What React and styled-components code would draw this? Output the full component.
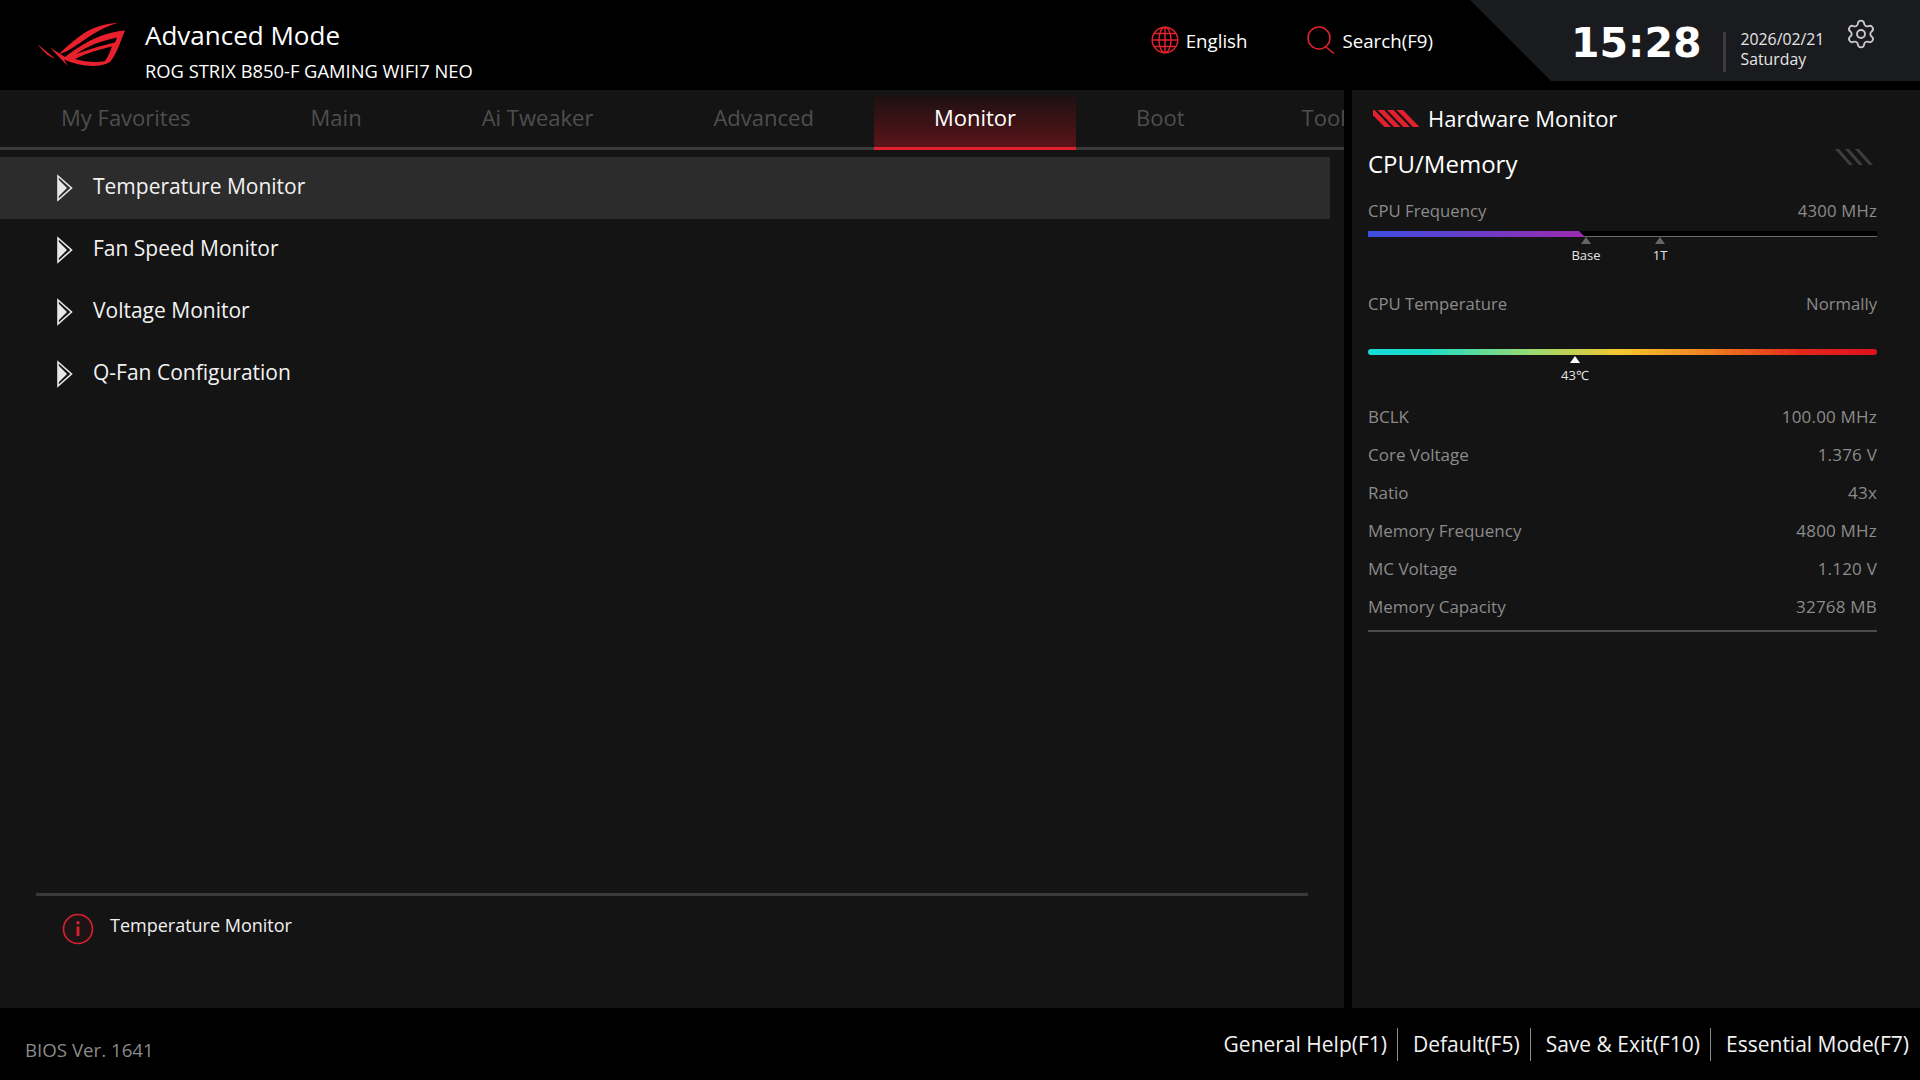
import React from 'react';
import styled, { createGlobalStyle } from 'styled-components';
import { Settings } from 'lucide-react';

const GlobalStyle = createGlobalStyle`
  html, body {
    margin: 0;
    padding: 0;
    width: 1920px;
    height: 1080px;
    overflow: hidden;
    background: #000;
    font-family: "Open Sans", "Noto Sans", sans-serif;
  }
  * { box-sizing: border-box; }
`;

const Page = styled.div`
  width: 1920px;
  height: 1080px;
  display: flex;
  flex-direction: column;
  background: #000;
`;

const Header = styled.header`
  height: 90px;
  display: flex;
  align-items: flex-start;
`;

const Brand = styled.div`
  display: flex;
  align-items: flex-start;
  padding-left: 37px;
  svg { margin-top: 22px; }
`;

const BrandText = styled.div`
  margin-left: 20px;
  color: #fff;
`;

const ModeTitle = styled.div`
  font-size: 26px;
  line-height: 36px;
  margin-top: 17px;
`;

const BoardName = styled.div`
  font-size: 18.35px;
  line-height: 26px;
  margin-top: 5px;
`;

const Tools = styled.div`
  margin-left: auto;
  margin-right: 37px;
  height: 81px;
  display: flex;
  align-items: center;
  gap: 60px;
`;

const Tool = styled.div`
  display: flex;
  align-items: center;
  gap: 7px;
  margin-top: -1px;
  color: #fff;
  font-size: 18.7px;
`;

const TimeBox = styled.div`
  width: 450px;
  height: 81px;
  padding-left: 101px;
  display: flex;
  align-items: flex-start;
  background: #1a1b1f;
  clip-path: polygon(0 0, 100% 0, 100% 100%, 81px 100%);
`;

const Clock = styled.div`
  font-family: "DejaVu Sans", sans-serif;
  font-weight: 700;
  font-size: 41px;
  line-height: 48px;
  margin-top: 19px;
  color: #fff;
`;

const TimeRule = styled.div`
  width: 3px;
  height: 40px;
  margin: 32px 15px 0 21px;
  background: #3c3c3e;
`;

const DateText = styled.div`
  margin-top: 30px;
  color: #e6e6e6;
  font-size: 15.8px;
  line-height: 19.5px;
`;

const GearSlot = styled.div`
  margin: 18px 0 0 21px;
  color: #c8c8c8;
  line-height: 0;
`;

const Body = styled.main`
  flex: 1;
  display: flex;
  gap: 8px;
`;

const LeftPanel = styled.section`
  width: 1344px;
  display: flex;
  flex-direction: column;
  background: #141414;
`;

const Tabs = styled.nav`
  height: 60px;
  padding-left: 1px;
  display: flex;
  overflow: hidden;
  box-shadow: inset 0 -3px 0 #3a3a3a;
`;

const Tab = styled.div`
  flex: none;
  height: ${(p) => (p.$active ? '55px' : '60px')};
  margin-top: ${(p) => (p.$active ? '5px' : '0')};
  margin-left: ${(p) => (p.$tail ? '-3px' : '0')};
  padding: ${(p) => (p.$active ? '0 60px 9px' : '0 60px 4px')};
  display: flex;
  align-items: center;
  font-size: 22px;
  color: ${(p) => (p.$active ? '#fff' : '#4e4e4e')};
  background: ${(p) => (p.$active ? 'linear-gradient(180deg, #1c1011 0%, #5a1519 100%)' : 'none')};
  border-bottom: 3px solid ${(p) => (p.$active ? '#e0202f' : '#3a3a3a')};
`;

const MenuList = styled.ul`
  flex: 1;
  list-style: none;
  margin: 7px 0 0;
  padding: 0;
`;

const MenuRow = styled.li`
  width: 1330px;
  height: 62px;
  padding-left: 57px;
  display: flex;
  align-items: center;
  gap: 20px;
  font-size: 21px;
  color: #f2f2f2;
  background: ${(p) => (p.$active ? '#2c2c2c' : 'transparent')};
`;

const MenuLabel = styled.span`
  margin-bottom: 4px;
`;

const HelpBox = styled.div`
  width: 1272px;
  height: 115px;
  margin-left: 36px;
  padding: 17px 0 0 26px;
  display: flex;
  align-items: flex-start;
  gap: 16px;
  border-top: 3px solid #3a3a3a;
  color: #f0f0f0;
  font-size: 18px;
  line-height: 24px;
`;

const RightPanel = styled.aside`
  flex: 1;
  padding: 0 43px 0 16px;
  background: #141414;
`;

const HwTitle = styled.div`
  height: 56px;
  padding-left: 5px;
  display: flex;
  align-items: center;
  gap: 7px;
  color: #fff;
  font-size: 22px;
`;

const SectionRow = styled.div`
  height: 34px;
  display: flex;
  align-items: center;
  justify-content: space-between;
  padding-right: 2px;
  color: #fff;
  font-size: 24px;
  svg { margin-top: -12px; }
`;

const StatHead = styled.div`
  height: 30px;
  margin-top: ${(p) => p.$top}px;
  display: flex;
  align-items: center;
  justify-content: space-between;
  color: #8b8b8b;
  font-size: 16.7px;
`;

const StatValue = styled.span`
  letter-spacing: 0.2px;
`;

const FreqGauge = styled.div`
  position: relative;
  height: 6px;
  margin-top: 6px;
  background: #000;
  border-bottom: 1px solid #6a6a6a;
`;

const FreqFill = styled.div`
  height: 6px;
  background: linear-gradient(90deg, #3c4de2 0%, #9c2bae 100%);
  clip-path: polygon(0 0, 211px 0, 100% 100%, 0 100%);
`;

const TempGauge = styled.div`
  position: relative;
  height: 6px;
  margin-top: 31px;
  border-radius: 3px;
  background: linear-gradient(90deg, #17dcdc 0%, #1fdcc4 12%, #8edb7a 30%, #f6c62e 50%, #ef7b1f 68%, #e3281a 85%, #e0101e 100%);
`;

const Marker = styled.div`
  position: absolute;
  top: ${(p) => p.$top}px;
  left: ${(p) => p.$left}px;
  display: flex;
  flex-direction: column;
  align-items: center;
  width: 60px;
  margin-left: -30px;
  color: #e4e4e4;
  font-size: 13px;
  line-height: 18px;
`;

const MarkerArrow = styled.div`
  width: 0;
  height: 0;
  margin-bottom: ${(p) => p.$gap}px;
  border-left: 5px solid transparent;
  border-right: 5px solid transparent;
  border-bottom: 7px solid ${(p) => p.$color};
`;

const StatList = styled.div`
  margin-top: 42px;
  padding-bottom: 5px;
  border-bottom: 2px solid #4c4c4c;
`;

const StatRow = styled.div`
  height: 38px;
  display: flex;
  align-items: center;
  justify-content: space-between;
  color: #8b8b8b;
  font-size: 17px;
`;

const Footer = styled.footer`
  height: 72px;
  padding: 0 11px 0 25px;
  display: flex;
  align-items: center;
`;

const BiosVersion = styled.div`
  margin-top: 11px;
  color: #8a8a8a;
  font-size: 18.7px;
`;

const FooterKeys = styled.div`
  margin-left: auto;
  display: flex;
  align-items: center;
`;

const FooterKey = styled.div`
  height: 33px;
  display: flex;
  align-items: center;
  color: #f2f2f2;
  font-size: 21px;
  margin-left: ${(p) => (p.$first ? '0' : '10px')};
  padding-left: ${(p) => (p.$first ? '0' : '15px')};
  border-left: ${(p) => (p.$first ? 'none' : '1.5px solid #8c8c8c')};
`;

const RogLogo = () => (
  <svg width="88" height="46" viewBox="37 22 88 46">
    <g fill="#e8202e" fillRule="evenodd">
      <path d="M119 22.5 C104 24 90 28 80 36 C72 42 65 48 59 54 C65 53 72 48 80 43 C92 34 104 27 119 22.5 Z" />
      <path d="M37.5 44 C42 50 47 56 55 58.5 C48 53 43 49 37.5 44 Z" />
      <path d="M125 30.5 C107 32 88 39 65 57 L50 47.5 L59 57 L68 66 L64 59.5 C80 67 100 68 110 62 C117 54 121 40 125 30.5 Z M112 46.5 C100 49 87 53 75 59 C85 62 97 63 105 61 C108 57 110 52 112 46.5 Z M117 37.5 C100 41 88 46 76 54 C90 49 103 45 115 42.5 Z" />
    </g>
  </svg>
);

const GlobeIcon = () => (
  <svg width="28" height="28" viewBox="0 0 28 28" fill="none" stroke="#e0222f" strokeWidth="1.5">
    <circle cx="14" cy="14" r="12.8" />
    <ellipse cx="14" cy="14" rx="6" ry="12.8" />
    <path d="M14 1.2 V26.8 M1.2 14 H26.8 M3 7.5 H25 M3 20.5 H25" />
  </svg>
);

const SearchIcon = () => (
  <svg width="28" height="28" viewBox="0 0 28 28" fill="none" stroke="#e0222f" strokeWidth="1.5">
    <circle cx="12" cy="12" r="11" />
    <path d="M19 21 L27 27.5" />
  </svg>
);

const RowArrow = () => (
  <svg width="16" height="28" viewBox="0 0 16 28" fill="none">
    <path d="M1 2 L14.5 14 L1 26 Z" stroke="#e8e8e8" strokeWidth="1.6" />
    <path d="M1 5 L10 14 L1 23 Z" fill="#e8e8e8" />
  </svg>
);

const InfoIcon = () => (
  <svg width="32" height="32" viewBox="0 0 32 32">
    <circle cx="16" cy="16" r="14.5" fill="#1e1415" stroke="#d8232f" strokeWidth="1.6" />
    <rect x="14.6" y="13.5" width="2.8" height="9.5" fill="#d8232f" />
    <circle cx="16" cy="9.8" r="1.7" fill="#d8232f" />
  </svg>
);

const HwStripes = () => (
  <svg width="48" height="17" viewBox="0 0 48 17" fill="#e5202e">
    <polygon points="0,0 1.5,0 18,17 11.5,17 0,5.15" />
    <polygon points="4.5,0 11,0 27.5,17 21,17" />
    <polygon points="14,0 20.5,0 37,17 30.5,17" />
    <polygon points="23.5,0 30,0 46.5,17 40,17" />
  </svg>
);

const GreyStripes = () => (
  <svg width="40" height="16" viewBox="0 0 40 16" fill="#3e3e3e">
    <polygon points="0,0 4,0 18,16 14,16" />
    <polygon points="10,0 14,0 28,16 24,16" />
    <polygon points="20,0 24,0 38,16 34,16" />
  </svg>
);

const tabs = ['My Favorites', 'Main', 'Ai Tweaker', 'Advanced', 'Monitor', 'Boot', 'Tool'];
const menu = ['Temperature Monitor', 'Fan Speed Monitor', 'Voltage Monitor', 'Q-Fan Configuration'];
const stats = [
  ['BCLK', '100.00 MHz'],
  ['Core Voltage', '1.376 V'],
  ['Ratio', '43x'],
  ['Memory Frequency', '4800 MHz'],
  ['MC Voltage', '1.120 V'],
  ['Memory Capacity', '32768 MB'],
];
const keys = ['General Help(F1)', 'Default(F5)', 'Save & Exit(F10)', 'Essential Mode(F7)'];

export default function App() {
  return (
    <Page>
      <GlobalStyle />
      <Header>
        <Brand>
          <RogLogo />
          <BrandText>
            <ModeTitle>Advanced Mode</ModeTitle>
            <BoardName>ROG STRIX B850-F GAMING WIFI7 NEO</BoardName>
          </BrandText>
        </Brand>
        <Tools>
          <Tool><GlobeIcon />English</Tool>
          <Tool><SearchIcon />Search(F9)</Tool>
        </Tools>
        <TimeBox>
          <Clock>15:28</Clock>
          <TimeRule />
          <DateText>
            <div>2026/02/21</div>
            <div>Saturday</div>
          </DateText>
          <GearSlot><Settings size={32} strokeWidth={1.4} /></GearSlot>
        </TimeBox>
      </Header>

      <Body>
        <LeftPanel>
          <Tabs>
            {tabs.map((t) => (
              <Tab key={t} $active={t === 'Monitor'} $tail={t === 'Tool'}>{t}</Tab>
            ))}
          </Tabs>
          <MenuList>
            {menu.map((m, i) => (
              <MenuRow key={m} $active={i === 0}>
                <RowArrow />
                <MenuLabel>{m}</MenuLabel>
              </MenuRow>
            ))}
          </MenuList>
          <HelpBox>
            <InfoIcon />
            Temperature Monitor
          </HelpBox>
        </LeftPanel>

        <RightPanel>
          <HwTitle><HwStripes />Hardware Monitor</HwTitle>
          <SectionRow>CPU/Memory<GreyStripes /></SectionRow>
          <StatHead $top={15}><span>CPU Frequency</span><StatValue>4300 MHz</StatValue></StatHead>
          <FreqGauge>
            <FreqFill style={{ width: 217 }} />
            <Marker $top={6} $left={218}><MarkerArrow $color="#666" $gap={2} />Base</Marker>
            <Marker $top={6} $left={292}><MarkerArrow $color="#666" $gap={2} />1T</Marker>
          </FreqGauge>
          <StatHead $top={51}><span>CPU Temperature</span><span>Normally</span></StatHead>
          <TempGauge>
            <Marker $top={7} $left={207}><MarkerArrow $color="#fff" $gap={3} />43℃</Marker>
          </TempGauge>
          <StatList>
            {stats.map(([label, value]) => (
              <StatRow key={label}><span>{label}</span><StatValue>{value}</StatValue></StatRow>
            ))}
          </StatList>
        </RightPanel>
      </Body>

      <Footer>
        <BiosVersion>BIOS Ver. 1641</BiosVersion>
        <FooterKeys>
          {keys.map((k, i) => (
            <FooterKey key={k} $first={i === 0}>{k}</FooterKey>
          ))}
        </FooterKeys>
      </Footer>
    </Page>
  );
}
